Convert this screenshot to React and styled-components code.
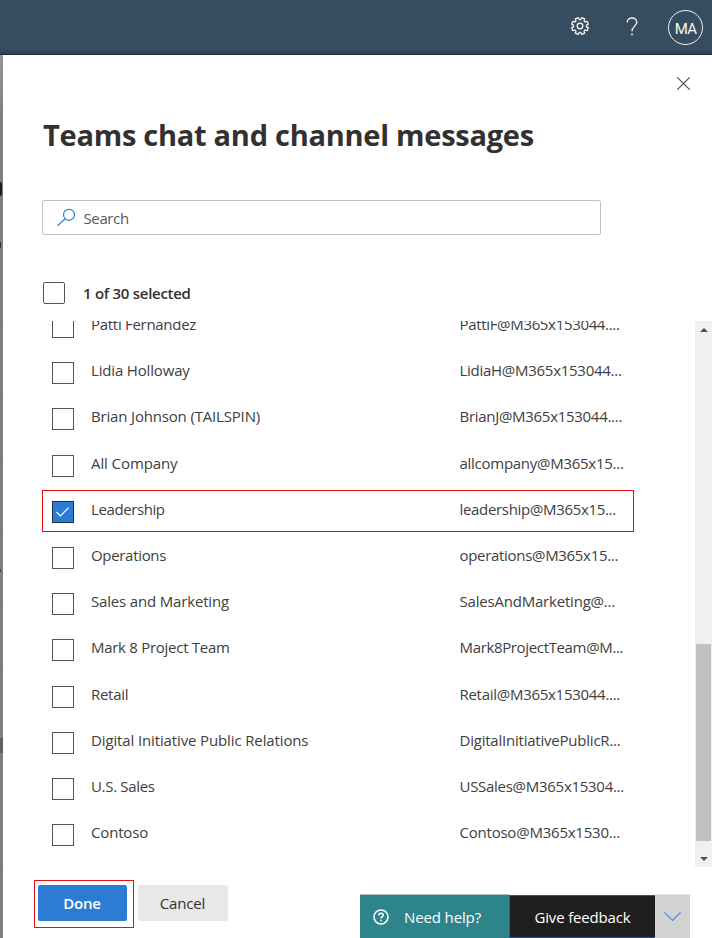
import React from 'react';
import styled, { createGlobalStyle } from 'styled-components';

const GlobalStyle = createGlobalStyle`
  * { box-sizing: border-box; }
  body { margin: 0; background: #fff; font-family: "Open Sans", "Noto Sans", sans-serif; font-size: 15px; color: #323130; }
  button { font-family: inherit; }
`;

const Page = styled.div`
  width: 712px;
  height: 938px;
  overflow: hidden;
  display: flex;
  flex-direction: column;
`;

const TopBar = styled.header`
  height: 55px;
  flex: none;
  display: flex;
  align-items: center;
  justify-content: flex-end;
  padding-right: 9px;
  background: linear-gradient(#364c61 0, #364c61 49px, #334354 53px, #1b344b 54px);
  color: #fbf9ec;
`;

const BarIcon = styled.svg`
  display: block;
  flex: none;
  width: ${(p) => p.$w}px;
  height: ${(p) => p.$h}px;
  margin-right: ${(p) => p.$gap}px;
  margin-bottom: ${(p) => p.$lift || 2}px;
`;

const Avatar = styled.div`
  width: 35px;
  height: 35px;
  border: 1px solid #f2f3ec;
  border-radius: 50%;
  display: flex;
  align-items: center;
  justify-content: center;
  font: 400 15px/33px Roboto, sans-serif;
  letter-spacing: -0.8px;
  padding-top: 3px;
`;

const Body = styled.div`
  flex: 1;
  display: flex;
  min-height: 0;
`;

const Backdrop = styled.div`
  width: 3px;
  flex: none;
  background: linear-gradient(#969696, #7f7f7f 64px, #7f7f7f);
  display: flex;
  flex-direction: column;
`;

const Mark = styled.i`
  display: block;
  flex: none;
  width: ${(p) => p.$w || 3}px;
  height: ${(p) => p.$h || 1}px;
  margin-top: ${(p) => p.$gap}px;
  background: ${(p) => p.$color || '#747474'};
  border-radius: ${(p) => p.$radius || '0'};
`;

const Panel = styled.main`
  flex: 1;
  min-width: 0;
  background: #fff;
  display: flex;
  flex-direction: column;
`;

const PanelHeader = styled.div`
  height: 60px;
  display: flex;
  justify-content: flex-end;
  padding: 22px 22px 0 0;
`;

const Title = styled.h1`
  margin: 0 0 0 40px;
  height: 40px;
  font-size: 29px;
  line-height: 40px;
  font-weight: 700;
  letter-spacing: -0.26px;
  white-space: nowrap;
`;

const SearchBox = styled.div`
  margin: 45px 0 0 39px;
  width: 559px;
  height: 35px;
  border: 1px solid #c4c3c2;
  border-radius: 2px;
  display: flex;
  align-items: center;
  padding: 0 0 0 13.5px;
  gap: 8px;
  color: #595856;
`;

const Label = styled.span`
  white-space: nowrap;
  letter-spacing: ${(p) => p.$track || 0}px;
`;

const SelectionBar = styled.div`
  margin: 47px 0 0 39.5px;
  height: 22px;
  display: flex;
  align-items: center;
  gap: 18.5px;
  font-weight: 600;
`;

const Checkbox = styled.span`
  flex: none;
  width: 22px;
  height: 22px;
  border: 1px solid ${(p) => (p.$checked ? '#22313f' : '#555')};
  border-radius: ${(p) => p.$radius || 0}px;
  background: ${(p) => (p.$checked ? '#2b7cd3' : '#fff')};
  display: flex;
  align-items: center;
  justify-content: center;
`;

const ListArea = styled.div`
  margin-top: 17px;
  height: 546px;
  display: flex;
  justify-content: space-between;
`;

const List = styled.div`
  width: 640px;
  overflow: hidden;
`;

const Rows = styled.div`
  margin-top: -16px;
`;

const Row = styled.div`
  height: 46.2px;
  padding-left: 39px;
  display: flex;
`;

const RowFrame = styled.div`
  width: 592px;
  height: 42px;
  border: 1px solid ${(p) => (p.$marked ? '#e60f18' : 'transparent')};
  display: grid;
  grid-template-columns: 39.5px 368.5px 1fr;
  padding-left: 8.5px;
  line-height: 37px;
  color: #414040;
`;

const BoxCell = styled.div`
  padding-top: 10px;
`;

const Scrollbar = styled.div`
  width: 17px;
  background: #f0f0f0;
  display: flex;
  flex-direction: column;
  align-items: center;
  padding: 7px 0 6px;
`;

const Thumb = styled.div`
  width: 15px;
  height: 197px;
  background: #c1c1c1;
  margin: 312px 0 auto;
`;

const Footer = styled.footer`
  flex: 1;
  display: flex;
  padding-left: 31px;
`;

const DoneFrame = styled.div`
  margin-top: 13px;
  width: 100px;
  height: 48px;
  border: 1px solid #e60f18;
  padding: 4px 0 0 3px;
`;

const Button = styled.button`
  display: block;
  border: 0;
  height: 36px;
  padding: 0 1px 0 0;
  width: ${(p) => (p.$primary ? 89 : 90)}px;
  border-radius: 2px;
  font-size: 15px;
  font-weight: ${(p) => (p.$primary ? 600 : 500)};
  color: ${(p) => (p.$primary ? '#fff' : '#323130')};
  background: ${(p) => (p.$primary ? '#2b7cd3' : '#e8e8e8')};
  margin: ${(p) => (p.$primary ? '0' : '18px 0 0 4px')};
`;

const HelpDock = styled.div`
  margin: 27px 22px 0 auto;
  display: flex;
  height: 44px;
  font-weight: 500;
  color: #fff;
`;

const HelpTab = styled.div`
  width: 149px;
  border-top: 1px solid #a9bdc0;
  background: #2d848b;
  display: flex;
  align-items: center;
  padding-left: 13px;
  gap: 15px;
`;

const FeedbackTab = styled.div`
  width: 146px;
  margin-top: 1px;
  border: 1px solid #1f5aa6;
  border-right: 0;
  background: #201f1e;
  display: flex;
  align-items: center;
  justify-content: center;
`;

const CollapseTab = styled.div`
  width: 35px;
  border-top: 1px solid #e7e7e7;
  background: #d2d2d2;
  display: flex;
  align-items: center;
  justify-content: center;
`;

const Icon = styled.svg`
  display: block;
  flex: none;
  overflow: visible;
`;

const people = [
  ['Patti Fernandez', -0.29, 'PattiF@M365x153044....', -0.33],
  ['Lidia Holloway', -0.16, 'LidiaH@M365x153044...', -0.27],
  ['Brian Johnson (TAILSPIN)', -0.17, 'BrianJ@M365x153044....', -0.29],
  ['All Company', -0.09, 'allcompany@M365x15...', -0.27],
  ['Leadership', -0.4, 'leadership@M365x15...', -0.32],
  ['Operations', -0.32, 'operations@M365x15...', -0.31],
  ['Sales and Marketing', -0.17, 'SalesAndMarketing@...', -0.2],
  ['Mark 8 Project Team', -0.28, 'Mark8ProjectTeam@M...', -0.35],
  ['Retail', -0.3, 'Retail@M365x153044....', -0.28],
  ['Digital Initiative Public Relations', -0.13, 'DigitalInitiativePublicR...', -0.22],
  ['U.S. Sales', -0.32, 'USSales@M365x15304...', -0.28],
  ['Contoso', -0.17, 'Contoso@M365x1530...', -0.22],
];

const gearPath = (() => {
  const points = [];
  for (let i = 0; i < 8; i += 1) {
    const mid = Math.PI / 8 + (i * Math.PI) / 4;
    [[-0.27, 6.5], [-0.19, 8.5], [0.19, 8.5], [0.27, 6.5]].forEach(([offset, r]) => {
      points.push(`${(9 + r * Math.sin(mid + offset)).toFixed(2)} ${(9 - r * Math.cos(mid + offset)).toFixed(2)}`);
    });
  }
  return `M${points.join('L')}Z`;
})();

export default function App() {
  return (
    <Page>
      <GlobalStyle />
      <TopBar>
        <BarIcon $w={18} $h={18} $gap={37} $lift={3} viewBox="0 0 18 18" fill="none" stroke="currentColor" strokeWidth="1.3" strokeLinejoin="round">
          <path d={gearPath} />
          <circle cx="9" cy="9" r="2.8" />
        </BarIcon>
        <BarIcon $w={12} $h={19} $gap={30} $lift={3} viewBox="0 0 12 19" fill="none" stroke="currentColor" strokeWidth="1.3">
          <path d="M1.2 5.5C1.2 2.6 3.2 1 6 1s4.8 1.7 4.8 4.2c0 3.8-4.8 4.2-4.8 9" />
          <path d="M6 16.5v1.7" strokeWidth="1.5" />
        </BarIcon>
        <Avatar>MA</Avatar>
      </TopBar>
      <Body>
        <Backdrop>
          <Mark $gap={62} />
          <Mark $gap={64} $h={14} $w={2} $color="#1c1c1c" $radius="0 2px 2px 0" />
          <Mark $gap={46} $h={6} $w={1} $color="#333" />
          <Mark $gap={76} />
          <Mark $gap={68} />
          <Mark $gap={68} />
          <Mark $gap={68} />
          <Mark $gap={37} $h={3} $w={1} $color="#444" />
          <Mark $gap={29} />
          <Mark $gap={68} />
          <Mark $gap={67} $h={15} $color="#606060" />
          <Mark $gap={114} />
        </Backdrop>
        <Panel>
          <PanelHeader>
            <Icon width="13" height="13" viewBox="0 0 13 13" fill="none" stroke="#4a4947" strokeWidth="1.1">
              <path d="M.3.3l12.4 12.4M12.7.3L.3 12.7" />
            </Icon>
          </PanelHeader>
          <Title>Teams chat and channel messages</Title>
          <SearchBox>
            <Icon width="19" height="18" viewBox="0 0 19 18" fill="none" stroke="#2b7cd3" strokeWidth="1.2">
              <circle cx="12" cy="5.8" r="5.5" />
              <path d="M8.1 9.7L.4 16.9" />
            </Icon>
            <Label $track={-0.38}>Search</Label>
          </SearchBox>
          <SelectionBar>
            <Checkbox $radius={2} />
            <Label $track={-0.28}>1 of 30 selected</Label>
          </SelectionBar>
          <ListArea>
            <List>
              <Rows>
                {people.map(([name, nameTrack, email, emailTrack]) => {
                  const checked = name === 'Leadership';
                  return (
                    <Row key={name}>
                      <RowFrame $marked={checked}>
                        <BoxCell>
                          <Checkbox $checked={checked}>
                            {checked && (
                              <Icon width="13" height="10" viewBox="0 0 13 10" fill="none" stroke="#fff" strokeWidth="1.2">
                                <path d="M.5 5l4 4L12.5.7" />
                              </Icon>
                            )}
                          </Checkbox>
                        </BoxCell>
                        <Label $track={nameTrack}>{name}</Label>
                        <Label $track={emailTrack}>{email}</Label>
                      </RowFrame>
                    </Row>
                  );
                })}
              </Rows>
            </List>
            <Scrollbar>
              <Icon width="8" height="4" viewBox="0 0 8 4" fill="#505050"><path d="M0 4L4 0l4 4z" /></Icon>
              <Thumb />
              <Icon width="8" height="4" viewBox="0 0 8 4" fill="#505050"><path d="M0 0l4 4 4-4z" /></Icon>
            </Scrollbar>
          </ListArea>
          <Footer>
            <DoneFrame>
              <Button $primary><Label $track={-0.2}>Done</Label></Button>
            </DoneFrame>
            <Button><Label $track={-0.15}>Cancel</Label></Button>
            <HelpDock>
              <HelpTab>
                <Icon width="16" height="16" viewBox="0 0 16 16" fill="none" stroke="#fff" strokeWidth="1.6">
                  <circle cx="8" cy="8" r="7" />
                  <path d="M5.8 6.4c0-1.4 1-2.1 2.2-2.1s2.2.8 2.2 1.9C10.2 7.7 8 7.8 8 9.6M8 10.8v1.5" />
                </Icon>
                <Label $track={-0.13}>Need help?</Label>
              </HelpTab>
              <FeedbackTab><Label $track={-0.17}>Give feedback</Label></FeedbackTab>
              <CollapseTab>
                <Icon width="17" height="9" viewBox="0 0 17 9" fill="none" stroke="#4f83d0" strokeWidth="1.1">
                  <path d="M.4.4l8.1 8 8.1-8" />
                </Icon>
              </CollapseTab>
            </HelpDock>
          </Footer>
        </Panel>
      </Body>
    </Page>
  );
}
